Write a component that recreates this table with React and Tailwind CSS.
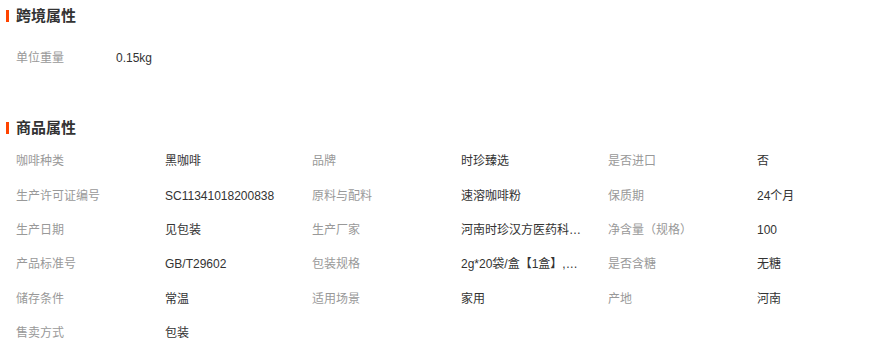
import React from "react";

const font = { fontFamily: '"Liberation Sans", "Noto Sans CJK SC", sans-serif' };

const rows = [
  [["咖啡种类", "黑咖啡"], ["品牌", "时珍臻选"], ["是否进口", "否"]],
  [["生产许可证编号", "SC11341018200838"], ["原料与配料", "速溶咖啡粉"], ["保质期", "24个月"]],
  [["生产日期", "见包装"], ["生产厂家", "河南时珍汉方医药科技有限公司"], ["净含量（规格）", "100"]],
  [["产品标准号", "GB/T29602"], ["包装规格", "2g*20袋/盒【1盒】,2g*20袋/盒【2盒】"], ["是否含糖", "无糖"]],
  [["储存条件", "常温"], ["适用场景", "家用"], ["产地", "河南"]],
  [["售卖方式", "包装"]],
];

function Header({ children }) {
  return (
    <div className="flex h-[32px] items-center">
      <div className="ml-[6px] h-[12px] w-[3px] bg-[#ff4400]" />
      <div className="ml-[7px] text-[15px] font-bold text-[#333]">{children}</div>
    </div>
  );
}

export default function App() {
  return (
    <div className="w-[890px] bg-white text-[12px]" style={font}>
      <Header>跨境属性</Header>
      <div className="mt-[9px] flex h-[34px] items-center">
        <div className="w-[116px] pl-[16px] text-[#999]">单位重量</div>
        <div className="text-[#333]">0.15kg</div>
      </div>
      <div className="h-[37px]" />
      <Header>商品属性</Header>
      <div className="w-[888px]">
        {rows.map((row, i) => (
          <div key={i} className="grid h-[34.4px] grid-cols-6 items-center">
            {row.flatMap(([k, v], j) => [
              <div key={j + "k"} className="truncate pl-[16px] text-[#999]">{k}</div>,
              <div key={j + "v"} className="truncate pl-[17px] pr-[8px] text-[#333]">{v}</div>,
            ])}
          </div>
        ))}
      </div>
    </div>
  );
}
